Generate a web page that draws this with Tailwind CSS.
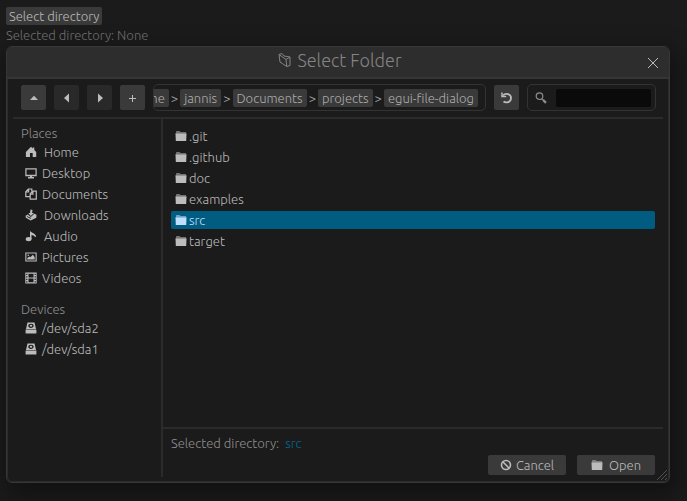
<!DOCTYPE html>
<html lang="en">
<head>
<meta charset="utf-8">
<title>Select Folder</title>
<script src="https://cdn.jsdelivr.net/npm/@tailwindcss/browser@4"></script>
</head>
<body class="flex min-h-screen flex-col overflow-hidden bg-[#1b1b1b] pt-[7px] pr-[17px] pb-[18px] pl-[6px] font-['Ubuntu','Noto_Sans',sans-serif] text-[13px] leading-[18px] font-light text-[#bcbcbc]">
<svg class="hidden" aria-hidden="true">
  <symbol id="folder" viewBox="0 0 12 12"><path d="M1 3V1.600Q1 1 1.600 1h3l1 1h5.400v1z" fill="currentColor" opacity=".55"/><path d="M.5 3.200h11l-.3 7.800H.8z" fill="currentColor"/></symbol>
  <symbol id="drive" viewBox="0 0 12 12"><path fill="currentColor" fill-rule="evenodd" d="M2.500.500h7L11 7H1zM6 1.700a2.700 2.100 0 100 4.200 2.700 2.100 0 000-4.200M.6 7.500h10.800v4H.6z"/><ellipse cx="6" cy="3.700" rx="1.300" ry="1" fill="currentColor"/></symbol>
</svg>
<button class="self-start rounded-[2px] bg-[#3a3a3a] px-[3px]">Select directory</button>
<p class="mt-px text-[#747474]">Selected directory: None</p>

<section class="relative mt-[2px] flex flex-1 flex-col rounded-[6px] border border-[#373737] bg-[#1b1b1b] shadow-[4px_8px_24px_4px_rgba(0,0,0,0.38)] outline-1 -outline-offset-2 outline-[#2b2b2b]">
  <header class="relative flex h-[32px] shrink-0 items-center justify-center gap-1 rounded-t-[5px] border-b-2 border-[#353535] bg-[#2d2d2d] pb-1 pl-[3px] text-[#848484]">
    <svg class="size-4" viewBox="0 0 16 16" fill="none" stroke="currentColor" stroke-linejoin="round"><path d="M2 2.500L9 7.500L9.800 14.500L3 10z"/><path d="M2 2.500L5 1.500L7 4L13 5V13.500L9.800 14.500M9 7.500L13 5"/></svg>
    <h1 class="text-[18px] leading-6 font-light">Select Folder</h1>
    <button aria-label="Close" class="absolute top-[10px] right-[10px] text-[#bcbcbc]"><svg class="size-3" viewBox="0 0 12 12" stroke="currentColor"><path d="M1 1l10 10M11 1L1 11"/></svg></button>
  </header>

  <div class="mx-[6px] flex items-center gap-2 border-b-2 border-[#2b2b2b] pt-[5px] pr-[7px] pb-[6px] pl-2">
    <button aria-label="Parent folder" class="grid size-[25px] shrink-0 place-items-center rounded-[2px] bg-[#3a3a3a]"><svg class="size-3" viewBox="0 0 12 12" fill="currentColor"><path d="M2 8l4-4.300L10 8z"/></svg></button>
    <button aria-label="Back" class="grid size-[25px] shrink-0 place-items-center rounded-[2px] bg-[#292929]"><svg class="size-3" viewBox="0 0 12 12" fill="currentColor"><path d="M8 1.500v9L3 6z"/></svg></button>
    <button aria-label="Forward" class="grid size-[25px] shrink-0 place-items-center rounded-[2px] bg-[#292929]"><svg class="size-3" viewBox="0 0 12 12" fill="currentColor"><path d="M4 1.500v9L9 6z"/></svg></button>
    <button aria-label="New folder" class="grid size-[25px] shrink-0 place-items-center rounded-[2px] bg-[#3a3a3a]"><svg class="size-3" viewBox="0 0 12 12" stroke="currentColor"><path d="M5.500 3v7M2 6.500h7"/></svg></button>
    <nav aria-label="Path" class="flex h-[27px] min-w-0 flex-1 items-center rounded-[5px] border border-[#333] pr-[7px]">
      <div class="flex min-w-0 flex-1 items-center justify-end gap-[2px] overflow-hidden text-[#adadad]">
        <button class="shrink-0 rounded-[2px] bg-[#3a3a3a] px-1">home</button><span>&gt;</span>
        <button class="shrink-0 rounded-[2px] bg-[#3a3a3a] px-1">jannis</button><span>&gt;</span>
        <button class="shrink-0 rounded-[2px] bg-[#3a3a3a] px-1">Documents</button><span>&gt;</span>
        <button class="shrink-0 rounded-[2px] bg-[#3a3a3a] px-1">projects</button><span>&gt;</span>
        <button class="shrink-0 rounded-[2px] bg-[#3a3a3a] px-1">egui-file-dialog</button>
      </div>
    </nav>
    <button aria-label="Refresh" class="grid size-[25px] shrink-0 place-items-center rounded-[2px] bg-[#3a3a3a]"><svg class="size-[13px]" viewBox="0 0 13 13" fill="none" stroke="currentColor" stroke-width="1.800"><path d="M3 4.500C5.500 1.800 11 2.800 11 7c0 4.300-5 5.400-7.500 3.500"/><path d="M2 1.500v4h4.200" stroke-width="1.500"/></svg></button>
    <label class="flex h-[27px] w-[129px] shrink-0 items-center justify-between rounded-[5px] border border-[#333] pr-1 pl-[7px]">
      <svg class="size-3" viewBox="0 0 12 12" fill="none" stroke="#8c8c8c"><circle cx="4.500" cy="4.200" r="3.300" stroke-width="1.200"/><path d="M6.800 6.700L8 7.900"/><path d="M8 7.900l3 3" stroke-width="2.200"/></svg>
      <input type="text" aria-label="Search" class="h-[18px] w-[95px] rounded-[2px] bg-[#0a0a0a] px-1 outline-none">
    </label>
  </div>

  <div class="mx-[6px] mb-[5px] flex flex-1">
    <aside class="w-[150px] shrink-0 border-r-2 border-[#2b2b2b] pt-[5px] pl-2">
      <h2 class="text-[#909090]">Places</h2>
      <ul class="mt-px flex flex-col gap-[3px]">
        <li><button class="flex items-center gap-[7px] pl-1"><svg class="size-3" viewBox="0 0 12 12" fill="currentColor"><path d="M6 .8l1.800 1.700V1.500h1.500V4l1.900 2v5H7.700V7H5v4H.9V6z"/></svg>Home</button></li>
        <li><button class="flex items-center gap-[5px] pl-1"><svg class="size-3" viewBox="0 0 12 12" fill="currentColor"><path fill-rule="evenodd" d="M.3 1.300h11.400v8H.3zM1.500 2.500v5.300h9V2.500z"/><path d="M5 9h2v1h2v1.400H3V10h2z"/></svg>Desktop</button></li>
        <li><button class="flex items-center gap-[5px] pl-1"><svg class="size-3" viewBox="0 0 12 12" fill="none" stroke="currentColor" stroke-width="1.200"><path d="M5 8.600H.8V3.800L3.300 1h3.500v2.500M3.600 1v3H.8"/><path d="M7.700 3.200h3.600v8H5.200V5.700zM7.900 3.200v2.900H5.200"/></svg>Documents</button></li>
        <li><button class="flex items-center gap-[7px] pl-1"><svg class="size-3" viewBox="0 0 12 12" fill="currentColor"><path d="M5.500 .4l2 .5-.4 3h2L5.800 7 3.300 4.100l1.700-.2z"/><path fill-rule="evenodd" d="M.6 6.800l2.200-1.300 3 2.500 3.500-3.300 2.200 1-.2 3-5.600 2.900L.8 8.700zM2.200 7.300l-.5.500 3.900 1.900.6-.7z"/></svg>Downloads</button></li>
        <li><button class="flex items-center gap-[7px] pl-1"><svg class="size-3" viewBox="0 0 12 12" fill="currentColor"><path d="M5 .8c1 2.400 4.800 1.800 6.200 5.600l-1 .7C9.300 5.500 7.800 5 6.500 4.900v4.300H5z"/><ellipse cx="3.600" cy="9.100" rx="2.900" ry="2.200"/></svg>Audio</button></li>
        <li><button class="flex items-center gap-[5px] pl-1"><svg class="size-3" viewBox="0 0 12 12" fill="currentColor"><path fill-rule="evenodd" d="M.3 1.500h11.400v9H.3zM1.400 2.600v6.800h9.200V2.600z"/><path d="M2.300 8.600V7l2-1.500 1 .8 2.600-2.500 1.800 2.400v2.400z"/><circle cx="3.300" cy="4.200" r=".8"/></svg>Pictures</button></li>
        <li><button class="flex items-center gap-[5px] pl-1"><svg class="size-3" viewBox="0 0 12 12" fill="currentColor"><path fill-rule="evenodd" d="M.3.500h11.400v11H.3zM3.500 1.700v3.700h5V1.700zM3.500 6.600v3.700h5V6.600zM1.200 1.700v1.200h1.200V1.700zM1.200 4.200v1.200h1.200V4.200zM1.200 6.700v1.200h1.200V6.700zM1.200 9.200v1.200h1.200V9.200zM9.600 1.700v1.200h1.200V1.700zM9.600 4.200v1.200h1.200V4.200zM9.600 6.700v1.200h1.200V6.700zM9.600 9.200v1.200h1.200V9.200z"/></svg>Videos</button></li>
      </ul>
      <h2 class="mt-[13px] text-[#909090]">Devices</h2>
      <ul class="mt-px flex flex-col gap-[3px]">
        <li><button class="flex items-center gap-[5px] pl-1"><svg class="size-3"><use href="#drive"/></svg>/dev/sda2</button></li>
        <li><button class="flex items-center gap-[5px] pl-1"><svg class="size-3"><use href="#drive"/></svg>/dev/sda1</button></li>
      </ul>
    </aside>
    <div class="flex min-w-0 flex-1 flex-col">
      <main class="flex-1 border-b-2 border-[#2b2b2b] pt-2 pr-2 pl-2">
        <ul class="flex flex-col gap-[3px]">
          <li><button class="flex w-full items-center gap-[2px] rounded-[2px] px-1"><svg class="size-3"><use href="#folder"/></svg>.git</button></li>
          <li><button class="flex w-full items-center gap-[2px] rounded-[2px] px-1"><svg class="size-3"><use href="#folder"/></svg>.github</button></li>
          <li><button class="flex w-full items-center gap-[2px] rounded-[2px] px-1"><svg class="size-3"><use href="#folder"/></svg>doc</button></li>
          <li><button class="flex w-full items-center gap-[2px] rounded-[2px] px-1"><svg class="size-3"><use href="#folder"/></svg>examples</button></li>
          <li><button aria-pressed="true" class="flex w-full items-center gap-[2px] rounded-[2px] bg-[#005c80] px-1 text-[#c0deff]"><svg class="size-3"><use href="#folder"/></svg>src</button></li>
          <li><button class="flex w-full items-center gap-[2px] rounded-[2px] px-1"><svg class="size-3"><use href="#folder"/></svg>target</button></li>
        </ul>
      </main>
      <footer class="pt-[5px] pr-2 pb-[2px] pl-2">
        <p class="flex gap-[6px] text-[#909090]">Selected directory: <span class="text-[#006a94]">src</span></p>
        <div class="mt-[3px] flex justify-end gap-[11px]">
          <button class="flex h-5 w-[78px] items-center justify-center gap-1 rounded-[2px] bg-[#3a3a3a]"><svg class="size-3" viewBox="0 0 12 12" fill="none" stroke="currentColor" stroke-width="1.600"><circle cx="6" cy="6" r="4.500"/><path d="M2.800 2.800l6.400 6.400"/></svg>Cancel</button>
          <button class="flex h-5 w-[78px] items-center justify-center gap-[6px] rounded-[2px] bg-[#3a3a3a]"><svg class="size-3"><use href="#folder"/></svg>Open</button>
        </div>
      </footer>
    </div>
  </div>
  <svg class="absolute right-px bottom-px size-3" viewBox="0 0 12 12" stroke="#505050"><path d="M1 11L11 1M5 11l6-6M9 11l2-2"/></svg>
</section>
</body>
</html>
